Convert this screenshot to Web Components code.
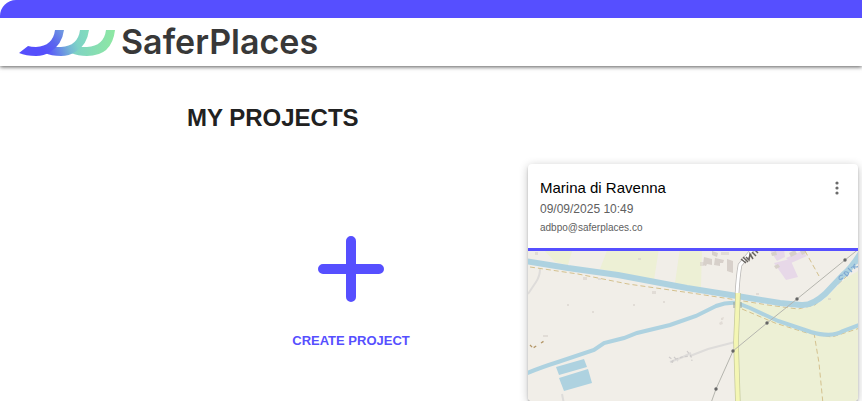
<!DOCTYPE html>
<html lang="en">
<head>
<meta charset="utf-8">
<meta name="viewport" content="width=device-width, initial-scale=1">
<title>SaferPlaces</title>
<style>
html{background:#fff}
body{margin:0;font-family:"Liberation Sans",Arial,sans-serif;color:#212121;--brand:#564fff}
</style>
</head>
<body>
<sp-app></sp-app>
<script>
const define = (name, html) => {
  const template = document.createElement('template');
  template.innerHTML = html;
  customElements.define(name, class extends HTMLElement {
    constructor() {
      super();
      this.attachShadow({mode: 'open'}).append(template.content.cloneNode(true));
    }
  });
};

define('sp-logo', `
<style>
:host{display:block}
a{display:flex;align-items:center;gap:6px;text-decoration:none;color:#383838}
svg{display:block;width:96px;height:28px;flex:none}
span{font:600 34px/44px Inter,"Open Sans",sans-serif}
</style>
<a href="#"><svg viewBox="0 0 96 28" aria-hidden="true">
<defs>
<linearGradient id="a" gradientUnits="userSpaceOnUse" x1="24" y1="22" x2="45" y2="2"><stop stop-color="#554ffc"/><stop offset=".45" stop-color="#5a66ee"/><stop offset="1" stop-color="#739fdf"/></linearGradient>
<linearGradient id="b" gradientUnits="userSpaceOnUse" x1="27" y1="23" x2="70" y2="8"><stop stop-color="#554ffc"/><stop offset=".5" stop-color="#75b5d6"/><stop offset=".7" stop-color="#7dd2c6"/><stop offset="1" stop-color="#82dcbd"/></linearGradient>
<linearGradient id="c" gradientUnits="userSpaceOnUse" x1="54" y1="0" x2="96" y2="0"><stop stop-color="#7ed2c5"/><stop offset="1" stop-color="#8ee8a2"/></linearGradient>
</defs>
<path fill="url(#c)" d="M55 19H68Q85 18 87 2H96Q93 28 68 28Q59 28 52 25Z"/>
<path fill="url(#b)" d="M32 19H42Q59 18 61 2H70Q68 17 57 23.500Q50 28 42 28Q32 28 26 25Z"/>
<path fill="url(#a)" d="M0 25L9 18Q12 19 17 19Q34 18 36 2H45Q43 17 31 24Q25 28 17 28Q7 28 0 25Z"/>
</svg><span>SaferPlaces</span></a>`);

define('sp-header', `
<style>
:host{display:block;position:relative;box-shadow:0 1px 4px rgba(0,0,0,.65)}
.band{height:18px;background:var(--brand);border-top-left-radius:16px}
.bar{display:flex;align-items:center;height:48px;padding:0 19px;background:#fff}
</style>
<div class="band"></div><div class="bar"><slot></slot></div>`);

define('sp-create', `
<style>
:host{display:grid}
button{display:flex;flex-direction:column;align-items:center;gap:31px;padding:72px 18px 52px 16px;border:0;background:none;color:var(--brand);font:700 13px/16px "Liberation Sans",Arial,sans-serif;text-transform:uppercase;cursor:pointer}
svg{width:66px;height:66px}
</style>
<button type="button"><svg viewBox="0 0 66 66" fill="none" stroke="currentColor" stroke-width="10" stroke-linecap="round" aria-hidden="true"><path d="M33 5V61M5 33H61"/></svg><slot></slot></button>`);

define('sp-map', `
<style>
:host{display:block}
svg{display:block;width:100%;height:auto;filter:blur(.6px)}
.clip{overflow:hidden}
</style>
<div class="clip"><svg viewBox="0 0 330 150" role="img" aria-label="Map of Marina di Ravenna" fill="none">
<path fill="#f1eee8" d="M-5-5H335V155H-5Z"/>
<g fill="#edf0d5"><path d="M14-3H45L40 14 27 11Z"/><path d="M80-3H131L126 29 72 18Z"/><path d="M152-3H174L173 37 147 32Z"/></g>
<path fill="#edf0d5" d="M209 50L275 58 294 50 318 27 335 17V155H211Z"/>
<g fill="#e7d8e8"><path d="M241-2H256L257 6 249 10Z"/><path d="M246 12L262 8 270 26 258 29Z"/><path d="M258 7L274 0 279 5 263 12Z"/></g>
<g fill="#d7d0ca"><path d="M176 6l8 2v6l-5-1-1 2-3-1zM187 7l9 2-1 3-3 0 0 3-6-1zM199 8l6 2v12l-6-2zM184 0l6 2-1 4-5-2zM243 2l5-2 1 4-5 1zM261 2l6-3 2 4-6 3zM246 15l4-2 2 3-4 2zM272 0l4-3 2 5-4 2z"/><path opacity=".6" d="M172 11h4v4h-4zM193 1h8v3h-8zM191 72l3-2 1 3-3 1zM193 67l3-1-1 3h-2zM228 42h3v2h-3zM300 47h3v2h-3zM39 53h2v2h-2zM64 60h2v2h-2zM105 53h2v2h-2zM135 50h2v2h-2zM55 26h4v3h-4zM70 27h3v2h-3zM7 1h3v3h-3zM110 7h3v2h-3zM15 84h5v2h-5zM124 40h4v3h-4z"/></g>
<path stroke="#dedcda" stroke-width="2" d="M0 43L8 31Q12 25 12 18M34 143L36 153M142 111L155 106 163 102M162 105L180 98 207 91"/>
<path stroke="#cfcccb" stroke-width="1.2" stroke-dasharray="3 2" d="M141 106l4 3-1 5M143 111l5-3 6-2 9-1M159 100l4 5 1 5M146 106l4 4"/>
<path stroke="#d4c18e" stroke-width="1" stroke-dasharray="5 3" d="M2 16L50 23 100 33 170 43 209 49 240 54 270 58 287 54 318 26 335 0M214 58L247 72 279 82 304 86 332 77M286 82L291 112 295 153M277 0L291 25"/>
<path stroke="#b49768" stroke-width="1.3" stroke-dasharray="3 2" d="M2 94L5 97 10 94M13 92L16 90"/>
<path stroke="#aed2e0" stroke-width="4" d="M-3 123Q11 117 30 111L66 99 76 92 96 87 109 82 142 74 168 65 188 55Q199 51 209 52L222 57 250 70 283 81Q304 87 315 80L334 73"/>
<path stroke="#aed2e0" stroke-width="6" d="M-3 10L40 17 90 24 159 37 209 45 252 52 273 54Q284 55 297 43L315 24Q323 18 336-3"/>
<path fill="#aed2e0" d="M28 116L56 108 59 116 31 124ZM31 127L60 118 64 132 36 140Z"/>
<path stroke="#b9b7b5" stroke-width="4.5" d="M209 43Q210 25 212 14L227-4"/>
<path stroke="#fff" stroke-width="3" d="M209 43Q210 25 212 14L226-3"/>
<path stroke="#c6ca9d" stroke-width="5.5" d="M210 42L208 91 210 155"/>
<path stroke="#f4f6b4" stroke-width="4" d="M210 42L208 91 210 155"/>
<path stroke="#99a49a" stroke-width="1" d="M206 51v6M213 51v6"/>
<path stroke="#b5b5ae" stroke-width="1" d="M183 152L188 138 205 100 239 72 269 48 317 9 332-3"/>
<g fill="#666"><circle cx="188" cy="138" r="1.7"/><circle cx="205" cy="100" r="1.7"/><circle cx="239" cy="72" r="1.7"/><circle cx="269" cy="48" r="1.7"/><circle cx="317" cy="9" r="1.7"/></g>
<path stroke="#67635f" stroke-width="1.5" d="M213 8l5 4M215 6l5 5M218 6l3 3 1-6 3 5M224 1l4 4M227-1l3 3"/>
<path stroke="#7fa9d2" stroke-width="1.1" d="M315 24q-4 0-4 3t4 0M316 22l3 3q3-3 0-4t-3 2M320 17l4 4M323 17q2-3 4 1M327 13q-3 3 1 3t2-4"/>
</svg></div>`);

define('sp-project', `
<style>
:host{display:block;border-radius:4px;overflow:hidden;background:#fff;box-shadow:0 2px 2px rgba(0,0,0,.22),0 2px 10px rgba(0,0,0,.24)}
header{display:flex;justify-content:space-between;align-items:start;padding:14px 12px 12px}
.text{display:flex;flex-direction:column}
.map{border-top:3px solid var(--brand)}
button{display:grid;place-items:center;width:18px;height:20px;padding:0;border:0;background:none;color:#6b6b6b;cursor:pointer}
svg{display:block;width:4px;height:14px}
::slotted(h2){margin:0;font-size:15px;line-height:20px;font-weight:400;color:#000}
::slotted(time){font-size:12px;line-height:22px;color:#606060}
::slotted(small){font-size:10px;line-height:16px;color:#606060}
</style>
<header><div class="text"><slot name="title"></slot><slot name="date"></slot><slot name="owner"></slot></div>
<button type="button" aria-label="Project options"><svg viewBox="0 0 4 14" fill="currentColor"><circle cx="2" cy="2" r="1.6"/><circle cx="2" cy="7" r="1.6"/><circle cx="2" cy="12" r="1.6"/></svg></button></header>
<div class="map"><slot></slot></div>`);

define('sp-app', `
<style>
:host{display:block}
main{padding:37px 4px 0 187px}
h1{margin:0 0 31px;font-size:24px;line-height:30px;font-weight:700;color:#212121}
.grid{display:grid;grid-template-columns:1fr 1fr;gap:11px;align-items:start}
</style>
<sp-header><sp-logo></sp-logo></sp-header>
<main><h1>MY PROJECTS</h1>
<div class="grid"><sp-create>Create project</sp-create>
<sp-project><h2 slot="title">Marina di Ravenna</h2><time slot="date" datetime="2025-09-09T10:49">09/09/2025 10:49</time><small slot="owner">adbpo@saferplaces.co</small><sp-map></sp-map></sp-project></div></main>`);
</script>
</body>
</html>
